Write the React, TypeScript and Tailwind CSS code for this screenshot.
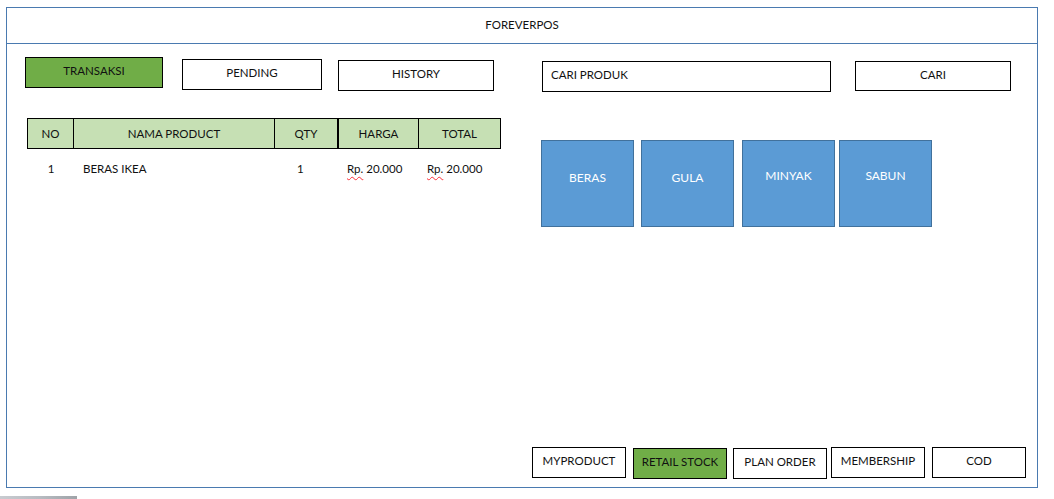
const font = { fontFamily: "Lato, 'Open Sans', sans-serif" };

function Btn({ label, className }: { label: string; className: string }) {
  return (
    <div className={`flex items-center justify-center border border-black pb-[3px] text-[11.5px] text-[#111] ${className}`}>
      {label}
    </div>
  );
}

function Tile({ label, pb }: { label: string; pb: string }) {
  return (
    <div className={`flex h-[87px] w-[93px] items-center justify-center border border-[#41719c] bg-[#5b9bd5] text-[12px] text-white ${pb}`}>
      {label}
    </div>
  );
}

function Rp() {
  return (
    <span>
      <span className="underline decoration-wavy decoration-red-500 decoration-1 underline-offset-[3px]">Rp.</span> 20.000
    </span>
  );
}

export default function App() {
  return (
    <div className="h-[499px] w-[1054px] overflow-hidden bg-white" style={font}>
      <div className="ml-[6px] mt-[7px] flex h-[481px] w-[1032px] flex-col border border-[#4a7ab0]">
        <div className="flex h-[36px] shrink-0 items-center justify-center border-b border-[#4a7ab0] pb-[2px] text-[11.5px] text-[#111]">
          FOREVERPOS
        </div>

        <div className="flex flex-1 flex-col">
          <div className="flex items-start">
            {/* left column */}
            <div className="ml-[18px] flex w-[476px] flex-col">
              <div className="flex items-start">
                <Btn label="TRANSAKSI" className="mt-[13px] h-[31px] w-[138px] bg-[#70ad47]" />
                <Btn label="PENDING" className="ml-[19px] mt-[15px] h-[31px] w-[140px]" />
                <Btn label="HISTORY" className="ml-[16px] mt-[16px] h-[31px] w-[156px]" />
              </div>

              <div className="ml-[2px] mt-[27px] w-[474px] text-[11.5px] text-[#111]">
                <div className="flex h-[31px] border border-black bg-[#c6e0b4]">
                  <div className="flex w-[46px] items-center justify-center border-r border-black">NO</div>
                  <div className="flex w-[201px] items-center justify-center border-r border-black">NAMA PRODUCT</div>
                  <div className="flex w-[64px] items-center justify-center border-r-2 border-black">QTY</div>
                  <div className="flex w-[80px] items-center justify-center border-r border-black">HARGA</div>
                  <div className="flex flex-1 items-center justify-center">TOTAL</div>
                </div>
                <div className="flex h-[39px] items-center pl-px">
                  <div className="w-[46px] text-center">1</div>
                  <div className="w-[201px] pl-[9px]">BERAS IKEA</div>
                  <div className="w-[64px] pl-[22px]">1</div>
                  <div className="w-[81px] pl-[8px]"><Rp /></div>
                  <div className="flex-1 pl-[7px]"><Rp /></div>
                </div>
              </div>
            </div>

            {/* right column */}
            <div className="ml-[41px] flex flex-col">
              <div className="flex items-start">
                <div className="mt-[17px] flex h-[31px] w-[289px] items-center border border-black pb-[3px] pl-[8px] text-[11.5px] text-[#111]">
                  CARI PRODUK
                </div>
                <Btn label="CARI" className="ml-[24px] mt-[17px] h-[30px] w-[156px]" />
              </div>
              <div className="-ml-px mt-[48px] flex items-start">
                <Tile label="BERAS" pb="pb-[12px]" />
                <div className="ml-[7px]"><Tile label="GULA" pb="pb-[12px]" /></div>
                <div className="ml-[8px]"><Tile label="MINYAK" pb="pb-[15px]" /></div>
                <div className="ml-[4px]"><Tile label="SABUN" pb="pb-[15px]" /></div>
              </div>
            </div>
          </div>

          <div className="mt-auto flex items-start justify-end pb-[8px] pr-[11px]">
            <Btn label="MYPRODUCT" className="mt-px h-[31px] w-[94px]" />
            <Btn label="RETAIL STOCK" className="ml-[7px] mt-[2px] h-[31px] w-[94px] bg-[#70ad47]" />
            <Btn label="PLAN ORDER" className="ml-[6px] mt-[2px] h-[31px] w-[94px]" />
            <Btn label="MEMBERSHIP" className="ml-[4px] mt-px h-[31px] w-[94px]" />
            <Btn label="COD" className="ml-[7px] mt-px h-[31px] w-[94px]" />
          </div>
        </div>
      </div>
      <div className="mt-[8px] h-[3px] w-[77px] bg-gradient-to-r from-[#c8cbd0] via-[#b8bcc2] to-[#9ea3a8]" />
    </div>
  );
}
